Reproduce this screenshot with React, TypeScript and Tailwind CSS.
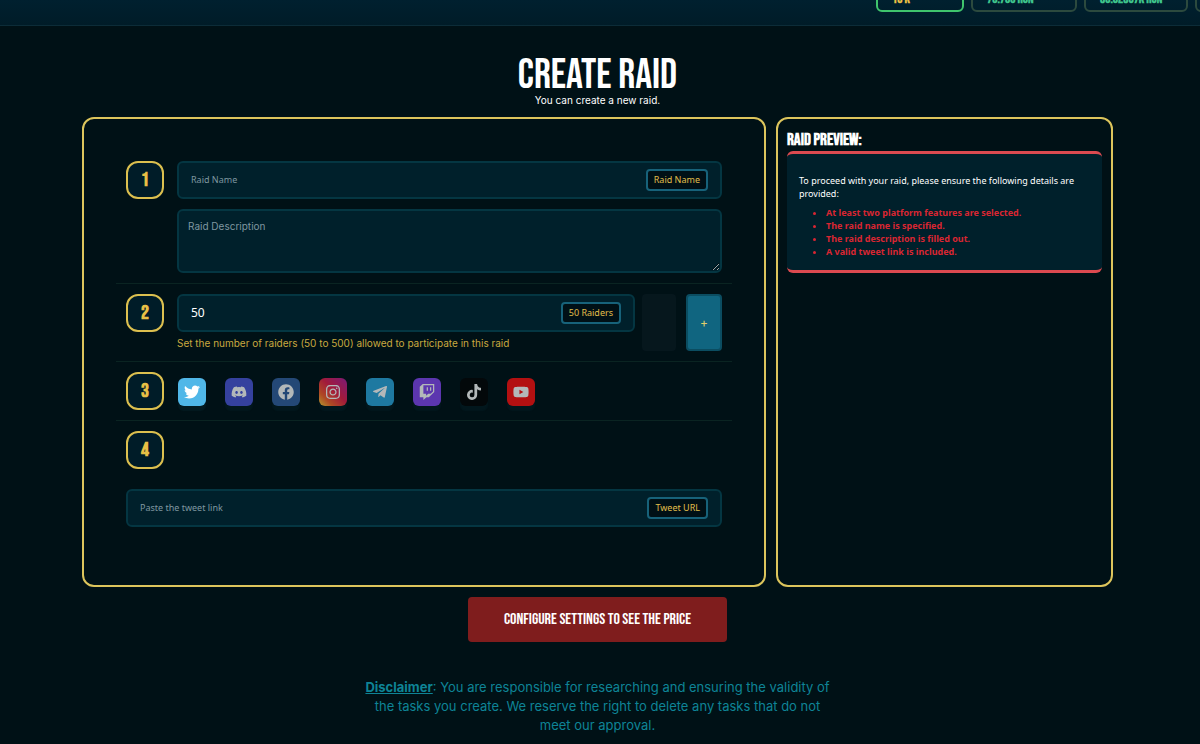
import { useState, type ReactNode } from 'react';
import { FaTwitter, FaDiscord, FaFacebook, FaInstagram, FaTelegramPlane, FaTwitch, FaTiktok, FaYoutube } from 'react-icons/fa';

const DISPLAY = "font-['Bebas_Neue','Liberation_Sans_Narrow','Roboto_Condensed',sans-serif]";
const UI = "font-['Noto_Sans',sans-serif]";

const MIN_RAIDERS = 50;
const MAX_RAIDERS = 500;

const platforms = [
  { name: 'Twitter', Icon: FaTwitter, bg: 'bg-[#50b7e8]' },
  { name: 'Discord', Icon: FaDiscord, bg: 'bg-[#4c56d8]' },
  { name: 'Facebook', Icon: FaFacebook, bg: 'bg-[#34609f]' },
  { name: 'Instagram', Icon: FaInstagram, bg: 'bg-[linear-gradient(45deg,#ffd43c_0%,#f9622b_25%,#e61f4b_55%,#b01fa0_100%)]' },
  { name: 'Telegram', Icon: FaTelegramPlane, bg: 'bg-[#2ba5dc]' },
  { name: 'Twitch', Icon: FaTwitch, bg: 'bg-[#8446f0]' },
  { name: 'TikTok', Icon: FaTiktok, bg: 'bg-[#050505]' },
  { name: 'YouTube', Icon: FaYoutube, bg: 'bg-[#ff1010]' },
];

const requirements = [
  'At least two platform features are selected.',
  'The raid name is specified.',
  'The raid description is filled out.',
  'A valid tweet link is included.',
];

function StepBadge({ step }: { readonly step: number }) {
  return (
    <div className={`flex size-[38px] shrink-0 items-center justify-center rounded-xl border-2 border-[#dcc04f] bg-[#001c28] text-xl font-bold text-[#e8bf45] ${DISPLAY}`}>
      {step}
    </div>
  );
}

function Step({ step, last, children }: { readonly step: number; readonly last?: boolean; readonly children?: ReactNode }) {
  return (
    <div className={`flex gap-[13px] px-2.5 py-2.5 ${last ? '' : 'border-b border-[#0a2422]'}`}>
      <StepBadge step={step} />
      <div className="min-w-0 flex-1">{children}</div>
    </div>
  );
}

interface FieldProps {
  readonly id: string;
  readonly tag: string;
  readonly value: string;
  readonly placeholder?: string;
  readonly large?: boolean;
  readonly onChange: (value: string) => void;
}

function Field({ id, tag, value, placeholder, large, onChange }: FieldProps) {
  return (
    <div className={`flex h-[38px] items-center rounded-md border-2 border-[#043642] bg-[#00202b] px-3 ${UI}`}>
      <input
        id={id}
        type="text"
        value={value}
        placeholder={placeholder}
        onChange={e => onChange(e.target.value)}
        className={`min-w-0 flex-1 bg-transparent text-white outline-none placeholder:text-[#7f97a0] ${large ? 'text-xs' : 'text-[9px]'}`}
      />
      <label htmlFor={id} className="flex h-[22px] items-center rounded border-2 border-[#17627a] bg-[#001016] px-1.5 text-[9px] whitespace-nowrap text-[#e0bf4b]">
        {tag}
      </label>
    </div>
  );
}

function TopBar() {
  const box = `h-9 shrink-0 rounded-md border-2 px-3.5 pt-[13px] text-[13px] font-bold leading-4 whitespace-nowrap ${DISPLAY}`;
  return (
    <header className="flex h-[26px] items-end justify-end gap-[7px] overflow-hidden border-b border-[#0c2c38] bg-linear-to-b from-[#00202f] to-[#001c28] pb-[13px]">
      <div className={`${box} w-[88px] border-[#3fc46c] text-[#e8bf45]`}>10 K</div>
      <div className={`${box} w-[106px] border-[#2c4a3e] text-[#3fc48c]`}>70.700 RUN</div>
      <div className={`${box} w-[104px] border-[#2c4a3e] text-[#3fc48c]`}>30.62367K RUN</div>
      <div className={`${box} -mr-[95px] w-[100px] border-[#2c4a3e]`} />
    </header>
  );
}

export default function App() {
  const [name, setName] = useState('');
  const [description, setDescription] = useState('');
  const [raiders, setRaiders] = useState('50');
  const [tweet, setTweet] = useState('');
  const [selected, setSelected] = useState<string[]>(['Twitter']);

  const count = Number(raiders) || MIN_RAIDERS;

  const toggle = (platform: string) => {
    setSelected(prev => (prev.includes(platform) ? prev.filter(p => p !== platform) : [...prev, platform]));
  };

  return (
    <div className="min-h-screen bg-[#001116] font-['Inter',sans-serif] text-white">
      <TopBar />

      <main className="pt-8 pr-[5px] pb-2">
        <div className="mx-auto w-full max-w-[1031px]">
          <div className="text-center">
            <h1 className={`text-[42px] leading-9 ${DISPLAY}`}>CREATE RAID</h1>
            <p className="text-[10px] leading-[13px]">You can create a new raid.</p>
          </div>

          <div className="mt-2.5 grid grid-cols-[684fr_337fr] gap-2.5">
            <section className="rounded-xl border-2 border-[#dcc55c] px-8 pt-8 pb-[58px]">
              <Step step={1}>
                <Field id="raid-name" tag="Raid Name" placeholder="Raid Name" value={name} onChange={setName} />
                <textarea
                  aria-label="Raid Description"
                  value={description}
                  placeholder="Raid Description"
                  onChange={e => setDescription(e.target.value)}
                  className="mt-2.5 block h-16 w-full rounded-md border-2 border-[#043642] bg-[#00202b] px-[9px] py-2 text-[10px] outline-none placeholder:text-[#7f97a0]"
                />
              </Step>

              <Step step={2}>
                <div className="flex">
                  <div className="min-w-0 flex-1">
                    <Field id="raiders" tag={`${count} Raiders`} value={raiders} large onChange={setRaiders} />
                    <p className="mt-1 text-[10px] leading-[15px] text-[#c9a93f]">
                      Set the number of raiders (50 to 500) allowed to participate in this raid
                    </p>
                  </div>
                  <button
                    type="button"
                    aria-label="Fewer raiders"
                    disabled={count <= MIN_RAIDERS}
                    onClick={() => setRaiders(String(count - 1))}
                    className="ml-[7px] w-[34px] rounded bg-[#06171d]"
                  />
                  <button
                    type="button"
                    onClick={() => setRaiders(String(Math.min(MAX_RAIDERS, count + 1)))}
                    className="ml-2.5 w-9 rounded border-2 border-[#0b4d61] bg-[#106580] text-xs text-[#e0cf6b]"
                  >
                    +
                  </button>
                </div>
              </Step>

              <Step step={3}>
                <div className="flex gap-[19px] pt-1.5 pl-px">
                  {platforms.map(({ name: platform, Icon, bg }) => (
                    <button
                      key={platform}
                      type="button"
                      aria-label={platform}
                      aria-pressed={selected.includes(platform)}
                      onClick={() => toggle(platform)}
                      className={`flex size-7 items-center justify-center rounded-md shadow-[0_5px_1px_#031a20] ${bg} ${selected.includes(platform) ? '' : 'opacity-70'}`}
                    >
                      <Icon className="size-4" />
                    </button>
                  ))}
                </div>
              </Step>

              <Step step={4} last />

              <div className="px-2.5 pt-2.5">
                <Field id="tweet-url" tag="Tweet URL" placeholder="Paste the tweet link" value={tweet} onChange={setTweet} />
              </div>
            </section>

            <aside className="rounded-xl border-2 border-[#dcc55c] px-[9px] pt-2.5">
              <h2 className={`text-[17px] leading-[22px] font-bold ${DISPLAY}`}>RAID PREVIEW:</h2>
              <div className={`rounded-md border-y-[3px] border-[#dc4a50] bg-[#00202b] px-3 pt-5 pb-3 text-[9px] leading-[13px] ${UI}`}>
                <p>To proceed with your raid, please ensure the following details are provided:</p>
                <ul className="mt-1.5 list-disc pl-[27px] font-bold text-[#d92632]">
                  {requirements.map(item => (
                    <li key={item}>{item}</li>
                  ))}
                </ul>
              </div>
            </aside>
          </div>

          <button type="button" className={`mx-auto mt-2.5 block h-[45px] w-[259px] rounded bg-[#7f1d1d] text-base ${DISPLAY}`}>
            CONFIGURE SETTINGS TO SEE THE PRICE
          </button>

          <p className="mx-auto mt-9 w-[470px] max-w-full text-center text-[13px] leading-[19px] text-[#0e8496]">
            <strong className="underline">Disclaimer</strong>: You are responsible for researching and ensuring the validity of the
            tasks you create. We reserve the right to delete any tasks that do not meet our approval.
          </p>
        </div>
      </main>
    </div>
  );
}
